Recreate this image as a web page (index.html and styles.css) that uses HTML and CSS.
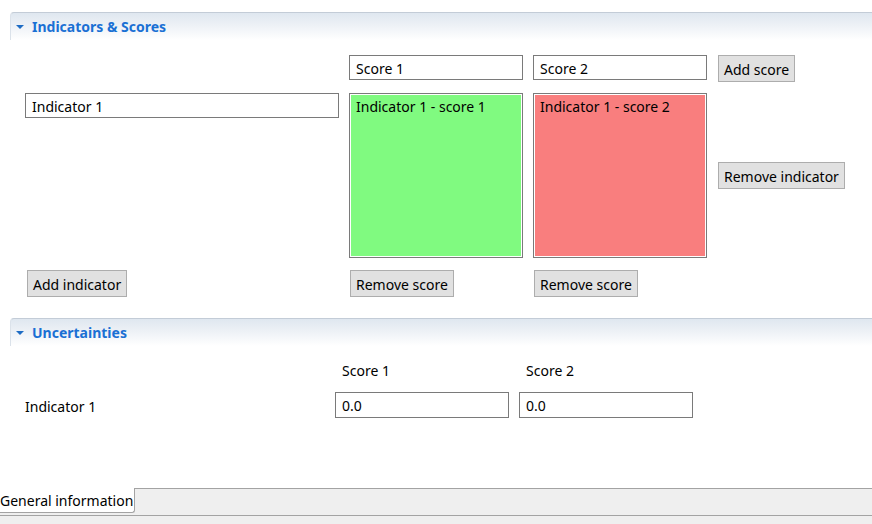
FILE: index.html
```html
<!DOCTYPE html>
<html>
<head>
<meta charset="utf-8">
<link rel="stylesheet" href="styles.css">
</head>
<body>
<div class="page">
  <section class="sec sec-scores">
    <header class="sec-head">
      <span class="tri"></span>
      <h2 class="sec-title">Indicators &amp; Scores</h2>
    </header>
    <div class="score-grid">
      <div></div>
      <input class="field" type="text" value="Score 1">
      <input class="field" type="text" value="Score 2">
      <div class="btn-cell"><button class="btn">Add score</button></div>

      <div class="ind-cell"><input class="field" type="text" value="Indicator 1"></div>
      <div class="score-box green">Indicator 1 - score 1</div>
      <div class="score-box red">Indicator 1 - score 2</div>
      <div class="btn-cell mid"><button class="btn">Remove indicator</button></div>

      <div class="btn-cell first"><button class="btn">Add indicator</button></div>
      <div class="btn-cell"><button class="btn">Remove score</button></div>
      <div class="btn-cell"><button class="btn">Remove score</button></div>
      <div></div>
    </div>
  </section>

  <section class="sec sec-unc">
    <header class="sec-head">
      <span class="tri"></span>
      <h2 class="sec-title">Uncertainties</h2>
    </header>
    <div class="unc-grid">
      <div></div>
      <div class="col-label">Score 1</div>
      <div class="col-label">Score 2</div>
      <div class="row-label">Indicator 1</div>
      <input class="field" type="text" value="0.0">
      <input class="field" type="text" value="0.0">
    </div>
  </section>

  <div class="tabbar">
    <div class="tab">General information</div>
  </div>
  <div class="tabfoot"></div>
</div>
</body>
</html>
```

FILE: styles.css
```css
html, body {
  margin: 0;
  padding: 0;
  background: #ffffff;
}
body {
  font-family: "Noto Sans", "Open Sans", sans-serif;
  font-size: 14px;
  color: #000000;
}
.page {
  width: 872px;
  height: 524px;
  display: flex;
  flex-direction: column;
  overflow: hidden;
}
.sec {
  margin-left: 10px;
}
.sec-scores {
  margin-top: 12px;
}
.sec-unc {
  margin-top: 21px;
}
.sec-head {
  height: 28px;
  display: flex;
  align-items: center;
  gap: 8px;
  padding-left: 5px;
  border-top: 1px solid #c3ccd7;
  border-left: 1px solid #dbe2ea;
  border-top-left-radius: 4px;
  background: linear-gradient(to bottom, #dfe7f0 0%, #edf1f6 45%, #ffffff 100%);
  box-sizing: border-box;
}
.tri {
  width: 0;
  height: 0;
  border-left: 4px solid transparent;
  border-right: 4px solid transparent;
  border-top: 4px solid #1e6cc4;
  margin-top: 1px;
}
.sec-title {
  margin: 0;
  font-size: 14px;
  font-weight: bold;
  color: #1a70d4;
  letter-spacing: 0;
}
.field {
  box-sizing: border-box;
  height: 25px;
  margin: 0;
  border: 1px solid #7a7a7a;
  padding: 1px 6px 0 6px;
  font: inherit;
  color: #000;
  background: #fff;
  outline: none;
  width: 100%;
}
.btn {
  box-sizing: border-box;
  height: 27px;
  margin: 0;
  border: 1px solid #adadad;
  background: #e1e1e1;
  padding: 1px 5px 0 5px;
  font: inherit;
  color: #000;
  border-radius: 0;
}
.score-grid {
  display: grid;
  grid-template-columns: 314px 174px 174px auto;
  grid-template-rows: 27px 166px 27px;
  column-gap: 10px;
  row-gap: 11px;
  margin-top: 15px;
  padding-left: 15px;
  align-items: start;
}
.ind-cell .field {
  width: 314px;
}
.btn-cell {
  display: flex;
  align-items: flex-start;
  padding-left: 1px;
}
.btn-cell.first {
  padding-left: 2px;
}
.btn-cell.mid {
  align-self: center;
  margin-top: -1px;
}
.score-box {
  box-sizing: border-box;
  height: 165px;
  border: 1px solid #7a7a7a;
  box-shadow: inset 0 0 0 1px #ffffff;
  padding: 2px 6px;
  line-height: 22px;
}
.green {
  background: #80fa80;
}
.red {
  background: #f97e7e;
}
.unc-grid {
  display: grid;
  grid-template-columns: 300px 174px 174px;
  grid-template-rows: 20px 26px;
  column-gap: 10px;
  row-gap: 12px;
  margin-top: 14px;
  padding-left: 15px;
  align-items: center;
}
.unc-grid .field {
  height: 26px;
}
.row-label {
  padding-top: 2px;
}
.col-label {
  padding-left: 7px;
}
.tabbar {
  margin-top: auto;
  height: 28px;
  box-sizing: border-box;
  border-top: 1px solid #a3a3a3;
  border-bottom: 1px solid #a3a3a3;
  background: #efefef;
  display: flex;
}
.tab {
  margin-top: -1px;
  height: 25px;
  box-sizing: border-box;
  background: #ffffff;
  border-right: 1px solid #a3a3a3;
  border-bottom: 1px solid #a3a3a3;
  border-bottom-right-radius: 3px;
  width: 135px;
  padding-left: 0;
  line-height: 25px;
  white-space: nowrap;
  overflow: hidden;
}
.tabfoot {
  height: 8px;
  background: #efefef;
}
```
